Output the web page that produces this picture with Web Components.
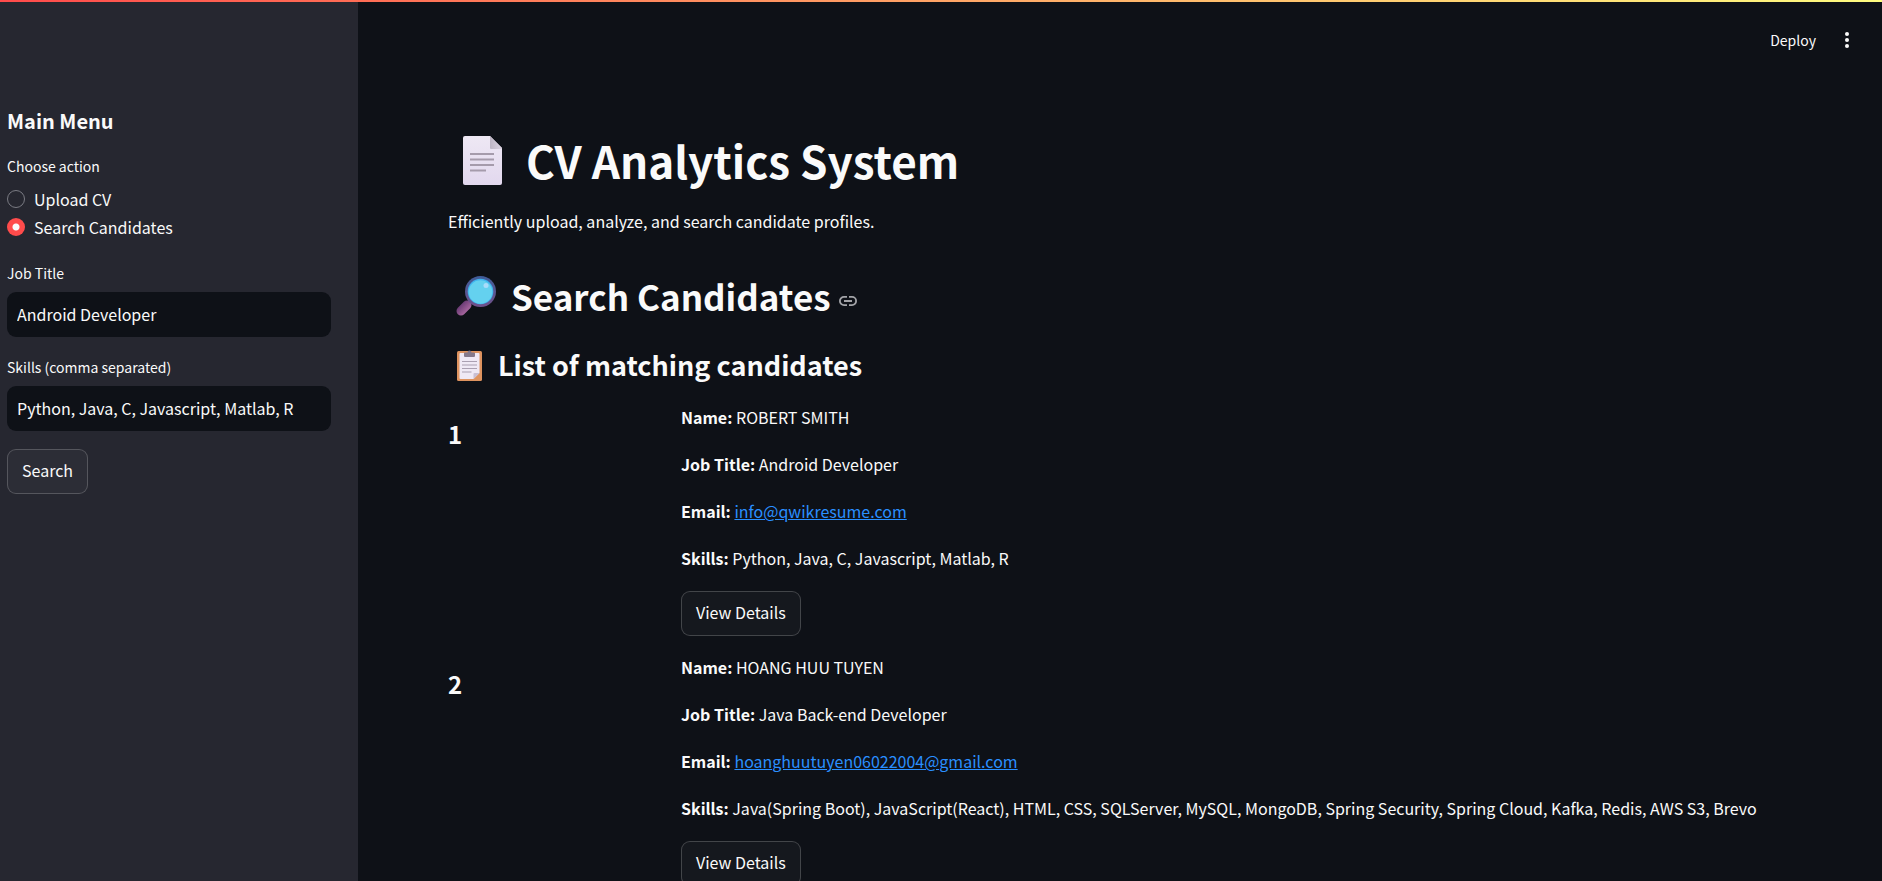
<!DOCTYPE html>
<html lang="en">
<head>
<meta charset="utf-8">
<title>CV Analytics System</title>
<style>
  html, body { height: 100%; margin: 0; }
  body {
    --bg: #0e1117; --panel: #262730; --text: #fafafa; --line: #fafafa33;
    background: var(--bg); color: var(--text);
    font: 16px/28px "Noto Sans CJK SC", "Noto Sans", sans-serif;
    overflow: hidden;
  }
</style>
</head>
<body>
<app-shell>
  <side-panel slot="side">
    <radio-group label="Choose action" options="Upload CV|Search Candidates" selected="1"></radio-group>
    <text-field label="Job Title" value="Android Developer"></text-field>
    <text-field label="Skills (comma separated)" value="Python, Java, C, Javascript, Matlab, R"></text-field>
    <action-button>Search</action-button>
  </side-panel>
  <app-toolbar slot="toolbar"></app-toolbar>
  <page-title>CV Analytics System</page-title>
  <page-intro>Efficiently upload, analyze, and search candidate profiles.</page-intro>
  <section-title>Search Candidates</section-title>
  <list-title>List of matching candidates</list-title>
  <candidate-card number="1" email="info@qwikresume.com">
    <span slot="name">ROBERT SMITH</span>
    <span slot="job">Android Developer</span>
    <span slot="skills">Python, Java, C, Javascript, Matlab, R</span>
  </candidate-card>
  <candidate-card number="2" email="hoanghuutuyen06022004@gmail.com">
    <span slot="name">HOANG HUU TUYEN</span>
    <span slot="job">Java Back-end Developer</span>
    <span slot="skills">Java(Spring Boot), JavaScript(React), HTML, CSS, SQLServer, MySQL, MongoDB, Spring Security, Spring Cloud, Kafka, Redis, AWS S3, Brevo</span>
  </candidate-card>
</app-shell>

<script>
const define = (name, render) => customElements.define(name, class extends HTMLElement {
  constructor() { super(); this.attachShadow({ mode: 'open' }); }
  connectedCallback() { this.shadowRoot.innerHTML = render(this); }
});

define('app-shell', () => `
  <style>
    :host { display: flex; flex-direction: column; height: 100vh; }
    .strip { flex: none; height: 2px; background: linear-gradient(90deg, #ff4b4b, #fffd80); }
    .body { flex: 1; min-height: 0; display: flex; }
    aside { flex: none; width: 358px; box-sizing: border-box; background: var(--panel); overflow: auto; }
    .content { flex: 1; min-width: 0; display: flex; flex-direction: column; }
    main { flex: 1; min-height: 0; overflow: auto; scrollbar-width: none; padding: 55px 88px 0 90px; }
  </style>
  <div class="strip"></div>
  <div class="body">
    <aside><slot name="side"></slot></aside>
    <div class="content"><slot name="toolbar"></slot><main><slot></slot></main></div>
  </div>`);

define('app-toolbar', () => `
  <style>
    :host { display: block; }
    header { display: flex; justify-content: flex-end; align-items: center; gap: 18px; height: 75px; padding-right: 22px; }
    button { font: inherit; color: inherit; background: none; border: 0; padding: 0; display: flex; align-items: center; justify-content: center; }
    .deploy { font-size: 14px; }
    .more { width: 26px; height: 32px; }
    svg { fill: currentColor; }
  </style>
  <header>
    <button class="deploy">Deploy</button>
    <button class="more" aria-label="More options"><svg width="4" height="16" viewBox="0 0 4 16"><circle cx="2" cy="2" r="2"/><circle cx="2" cy="8" r="2"/><circle cx="2" cy="14" r="2"/></svg></button>
  </header>`);

define('side-panel', () => `
  <style>
    :host { display: flex; flex-direction: column; align-items: flex-start; gap: 18px; padding: 106px 27px 0 7px; }
    h2 { margin: 0 0 2px; font-size: 20px; line-height: 26px; font-weight: 700; }
    ::slotted(:not(action-button)) { align-self: stretch; }
  </style>
  <h2>Main Menu</h2>
  <slot></slot>`);

define('radio-group', el => `
  <style>
    :host { display: block; padding-bottom: 2px; }
    fieldset { border: 0; margin: 0; padding: 0; min-width: 0; }
    legend { padding: 0; margin-bottom: 7px; font-size: 14px; line-height: 24px; }
    label { display: flex; align-items: center; gap: 9px; height: 28px; }
    input { appearance: none; flex: none; width: 18px; height: 18px; margin: 0; border: 1px solid #7a7b83; border-radius: 50%; }
    input:checked { border: 0; background: radial-gradient(circle, var(--text) 3px, #ff4b4b 4px); }
  </style>
  <fieldset>
    <legend>${el.getAttribute('label')}</legend>
    ${el.getAttribute('options').split('|').map((o, i) => `<label><input type="radio" name="r"${i == el.getAttribute('selected') ? ' checked' : ''}>${o}</label>`).join('')}
  </fieldset>`);

define('text-field', el => `
  <style>
    :host { display: block; }
    label { display: block; margin-bottom: 7px; font-size: 14px; line-height: 24px; }
    input { display: block; box-sizing: border-box; width: 100%; height: 45px; padding: 0 10px 2px; border: 0; border-radius: 9px; background: var(--bg); color: inherit; font: inherit; outline: 0; }
  </style>
  <label for="f">${el.getAttribute('label')}</label>
  <input id="f" type="text" value="${el.getAttribute('value')}">`);

define('action-button', () => `
  <style>
    :host { display: block; }
    button { height: 45px; padding: 0 14px 3px; border: 1px solid var(--line); border-radius: 9px; background: #fafafa08; color: inherit; font: inherit; display: block; }
  </style>
  <button><slot></slot></button>`);

define('page-title', () => `
  <style>
    :host { display: block; }
    h1 { display: flex; align-items: center; gap: 24px; margin: 0; padding-left: 15px; font-size: 44px; line-height: 56px; font-weight: 700; }
  </style>
  <h1><svg width="39" height="49" viewBox="0 0 39 49" aria-hidden="true">
    <defs><linearGradient id="p" x2="0" y2="1"><stop stop-color="#eee8f4"/><stop offset="1" stop-color="#e2d8ee"/></linearGradient>
    <linearGradient id="f" x2="1" y2="0"><stop stop-color="#bdb5c4"/><stop offset="1" stop-color="#dcd4e2"/></linearGradient></defs>
    <path fill="url(#p)" d="M2 0H27L39 12V47a2 2 0 0 1-2 2H2a2 2 0 0 1-2-2V2a2 2 0 0 1 2-2z"/>
    <path fill="url(#f)" d="M27 0L39 12V13H28a1 1 0 0 1-1-1z"/>
    <path stroke="#a59bab" stroke-width="2" d="M7 18H31M7 23.500H31M7 29H31M7 34.500H23"/>
  </svg><span><slot></slot></span></h1>`);

define('page-intro', () => `
  <style>:host { display: block; } p { margin: 19px 0 37px; }</style>
  <p><slot></slot></p>`);

define('section-title', () => `
  <style>
    :host { display: block; }
    h2 { display: flex; align-items: center; margin: 0; padding-left: 8px; font-size: 35px; line-height: 48px; font-weight: 700; }
    span { margin: 0 8px 0 15px; }
    a { display: flex; color: #a3a4a8; padding-top: 9px; }
  </style>
  <h2><svg width="40" height="40" viewBox="0 0 40 40" aria-hidden="true">
    <defs><linearGradient id="h" x2="1" y2="1"><stop stop-color="#6d3d76"/><stop offset="1" stop-color="#a4649c"/></linearGradient>
    <linearGradient id="r" x2="0" y2="1"><stop stop-color="#3f5c98"/><stop offset="1" stop-color="#71508a"/></linearGradient></defs>
    <path stroke="#584375" stroke-width="4" d="M11 29L16 24"/>
    <path stroke="url(#h)" stroke-width="9" stroke-linecap="round" d="M5 35L11 29"/>
    <circle cx="24.500" cy="15.500" r="15.500" fill="url(#r)"/>
    <circle cx="24.500" cy="15.500" r="12.800" fill="#3fb4ee"/>
    <circle cx="24.500" cy="16" r="11.800" fill="#64d1ef"/>
    <circle cx="30" cy="9.500" r="2.500" fill="#a9dcfa"/>
  </svg><span><slot></slot></span>
  <a href="#search-candidates" aria-label="Link to this section"><svg width="18" height="10" viewBox="0 0 18 10" fill="none" stroke="currentColor" stroke-width="1.800"><path d="M8 .900H5a4.100 4.100 0 0 0 0 8.200H8M10 .900H13a4.100 4.100 0 0 1 0 8.200H10M5 5H13"/></svg></a></h2>`);

define('list-title', () => `
  <style>
    :host { display: block; }
    h3 { display: flex; align-items: center; gap: 16px; margin: 27px 0 20px; padding-left: 9px; font-size: 27px; line-height: 36px; font-weight: 700; }
  </style>
  <h3><svg width="25" height="31" viewBox="0 0 25 31" aria-hidden="true">
    <rect y="1" width="25" height="30" rx="1.500" fill="#de935f"/>
    <path fill="#efe9f5" d="M3.500 3H21.500a1 1 0 0 1 1 1V23L16.500 29H3.500a1 1 0 0 1-1-1V4a1 1 0 0 1 1-1z"/>
    <path fill="#c9bfd3" d="M22.500 23H17.500a1 1 0 0 0-1 1V29z"/>
    <path fill="#85798b" d="M7 3.500a1 1 0 0 1 1-1H10.500a2 2 0 0 1 4 0H17a1 1 0 0 1 1 1V6a1 1 0 0 1-1 1H8a1 1 0 0 1-1-1z"/>
    <path stroke="#aaa0b2" stroke-width="1.200" d="M5 11.500H20M5 15H20M5 18.500H20M5 22H14.500"/>
  </svg><span><slot></slot></span></h3>`);

define('candidate-card', el => `
  <style>
    :host { display: grid; grid-template-columns: 217px minmax(0, 1fr); column-gap: 16px; margin-bottom: 17px; }
    h4 { margin: 15px 0 0; font-size: 24px; line-height: 32px; font-weight: 700; }
    p { margin: 0 0 19px; }
    a { color: #2a8fff; }
  </style>
  <h4>${el.getAttribute('number')}</h4>
  <div>
    <p><strong>Name:</strong> <slot name="name"></slot></p>
    <p><strong>Job Title:</strong> <slot name="job"></slot></p>
    <p><strong>Email:</strong> <a href="mailto:${el.getAttribute('email')}">${el.getAttribute('email')}</a></p>
    <p><strong>Skills:</strong> <slot name="skills"></slot></p>
    <action-button>View Details</action-button>
  </div>`);
</script>
</body>
</html>
